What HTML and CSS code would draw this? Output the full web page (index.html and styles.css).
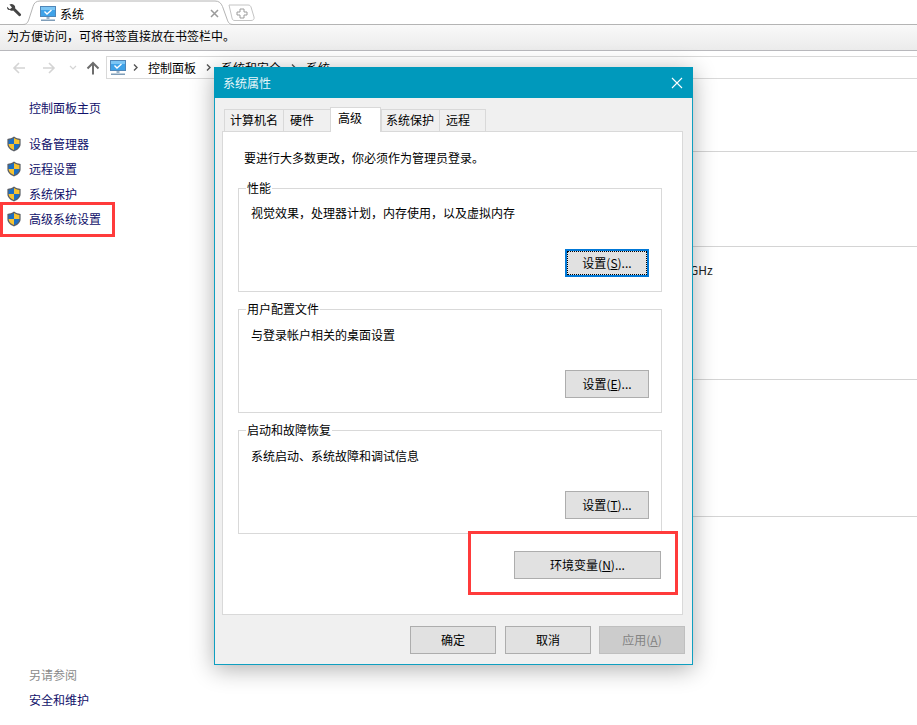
FILE: index.html
```html
<!DOCTYPE html>
<html lang="zh-CN">
<head>
<meta charset="utf-8">
<title>系统属性</title>
<link rel="stylesheet" href="styles.css">
</head>
<body>
<svg class="defs" width="0" height="0" aria-hidden="true">
  <defs>
    <symbol id="monitor" viewBox="0 0 16 16">
      <rect x="0.5" y="0.5" width="15" height="10" fill="#3fa2e8" stroke="#4f86b8"/>
      <rect x="1" y="1" width="14" height="3" fill="#7cc6f5"/>
      <path d="M4.500 5.500l2.500 2.500 4.500-4" fill="none" stroke="#fff" stroke-width="1.400"/>
      <rect x="6.500" y="11" width="3" height="2" fill="#9db4c8"/>
      <rect x="1" y="13.500" width="14" height="1.500" fill="#7f9db8"/>
    </symbol>
    <symbol id="shield" viewBox="0 0 16 16">
      <path d="M8 .6C6 2.200 3.800 2.800 1.400 2.900v5.300c0 3.200 2.900 5.800 6.600 7.200 3.700-1.400 6.600-4 6.600-7.200V2.900C12.200 2.800 10 2.200 8 .6z" fill="#5b5f66"/>
      <path d="M8 2v6H2.600V3.900C4.600 3.700 6.400 3.200 8 2z" fill="#1c6fc4"/>
      <path d="M8 2c1.600 1.200 3.400 1.700 5.400 1.900V8H8z" fill="#f7c331"/>
      <path d="M2.600 8H8v6.100C5 12.900 2.700 10.800 2.600 8z" fill="#f7c331"/>
      <path d="M8 8h5.400c-.1 2.800-2.400 4.900-5.400 6.100z" fill="#1c6fc4"/>
    </symbol>
  </defs>
</svg>

<header class="browser">
  <div class="tabstrip">
    <svg class="wrench" width="16" height="16" viewBox="0 0 16 16"><path d="M1 3.800 3.800 6.300 6 4.400 3.400 1.500C5.400.2 8.300 1 9 3.300c.2.700.2 1.400.1 2l5.800 5.600c.9.900-1 3-2 2.100L7.200 7.500C4.300 8.200.6 7 1 3.800z" fill="#444"/></svg>
    <div class="tab">
      <svg class="tab-shape" width="206" height="25" viewBox="0 0 206 25"><path d="M-27 24.500H-4C0 24.500 1 22 2 19L6 6.500C7 3 9 1 13 1H188C192 1 194 3 195.500 6.500L200 19C201 22 202 24.500 206 24.500" fill="#fff" stroke="#b4b4b4"/></svg>
      <svg class="tab-icon" width="16" height="16"><use href="#monitor"/></svg>
      <span class="tab-title">系统</span>
      <svg class="tab-close" width="9" height="9" viewBox="0 0 9 9"><path d="M1 1l7 7M8 1L1 8" stroke="#9a9a9a" stroke-width="1.500"/></svg>
    </div>
    <div class="newtab">
      <svg width="27" height="18" viewBox="0 0 27 18"><path d="M1 1H20C22 1 22.500 2 23 3L26 13C26.500 15 25.500 16.500 23 16.500H7C5 16.500 4.500 16 4 14z" fill="#fff" stroke="#c4c4c4"/><path d="M12 5h4v3h3v3h-3v3h-4v-3H9V8h3z" fill="#fff" stroke="#9c9c9c"/></svg>
    </div>
  </div>
  <div class="bookmarks">为方便访问，可将书签直接放在书签栏中。</div>
</header>

<nav class="navrow">
  <svg class="nav-btn" width="14" height="14" viewBox="0 0 14 14"><path d="M13 7H2M7 2L2 7l5 5" fill="none" stroke="#d4d4d4" stroke-width="1.600"/></svg>
  <svg class="nav-btn fwd" width="14" height="14" viewBox="0 0 14 14"><path d="M1 7h11M7 2l5 5-5 5" fill="none" stroke="#d4d4d4" stroke-width="1.600"/></svg>
  <svg class="nav-btn down" width="8" height="6" viewBox="0 0 8 6"><path d="M1 1l3 3 3-3" fill="none" stroke="#d4d4d4" stroke-width="1.200"/></svg>
  <svg class="nav-btn up" width="14" height="14" viewBox="0 0 14 14"><path d="M7 13.500V2M1.500 7.500 7 2l5.500 5.500" fill="none" stroke="#6d6d6d" stroke-width="2"/></svg>
  <div class="address">
    <svg class="addr-icon" width="16" height="16"><use href="#monitor"/></svg>
    <svg class="chev" width="5" height="7" viewBox="0 0 5 7"><path d="M1 .5l3 3-3 3" fill="none" stroke="#555" stroke-width="1.400"/></svg>
    <span>控制面板</span>
    <svg class="chev" width="5" height="7" viewBox="0 0 5 7"><path d="M1 .5l3 3-3 3" fill="none" stroke="#555" stroke-width="1.400"/></svg>
    <span>系统和安全</span>
    <svg class="chev" width="5" height="7" viewBox="0 0 5 7"><path d="M1 .5l3 3-3 3" fill="none" stroke="#555" stroke-width="1.400"/></svg>
    <span>系统</span>
  </div>
</nav>

<div class="main">
  <aside class="sidebar">
    <a class="home">控制面板主页</a>
    <ul class="links">
      <li><svg width="16" height="16"><use href="#shield"/></svg>设备管理器</li>
      <li><svg width="16" height="16"><use href="#shield"/></svg>远程设置</li>
      <li><svg width="16" height="16"><use href="#shield"/></svg>系统保护</li>
      <li class="marked"><svg width="16" height="16"><use href="#shield"/></svg>高级系统设置</li>
    </ul>
    <div class="seealso">
      <div class="seealso-title">另请参阅</div>
      <a class="seealso-link">安全和维护</a>
    </div>
  </aside>
  <section class="content">
    <div class="sec s1"></div>
    <div class="sec s2"></div>
    <div class="sec s3"><span class="ghz">GHz</span></div>
    <div class="sec s4"></div>
  </section>
</div>

<div class="dialog">
  <div class="titlebar">
    <span>系统属性</span>
    <svg width="12" height="12" viewBox="0 0 12 12"><path d="M1 1l10 10M11 1L1 11" stroke="#fff" stroke-width="1.100"/></svg>
  </div>
  <div class="dialog-body">
    <div class="tabs">
      <div class="dtab t1">计算机名</div>
      <div class="dtab t2">硬件</div>
      <div class="dtab t3 active">高级</div>
      <div class="dtab t4">系统保护</div>
      <div class="dtab t5">远程</div>
    </div>
    <div class="page">
      <p class="notice">要进行大多数更改，你必须作为管理员登录。</p>
      <fieldset class="group">
        <legend>性能</legend>
        <p>视觉效果，处理器计划，内存使用，以及虚拟内存</p>
        <div class="btnrow"><button class="btn focus"><span class="dots">设置(<u>S</u>)...</span></button></div>
      </fieldset>
      <fieldset class="group">
        <legend>用户配置文件</legend>
        <p>与登录帐户相关的桌面设置</p>
        <div class="btnrow"><button class="btn">设置(<u>E</u>)...</button></div>
      </fieldset>
      <fieldset class="group">
        <legend>启动和故障恢复</legend>
        <p>系统启动、系统故障和调试信息</p>
        <div class="btnrow"><button class="btn">设置(<u>T</u>)...</button></div>
      </fieldset>
      <div class="envrow"><button class="btn env">环境变量(<u>N</u>)...</button></div>
      <div class="redbox"></div>
    </div>
    <div class="footer">
      <button class="btn foot">确定</button>
      <button class="btn foot">取消</button>
      <button class="btn foot disabled">应用(<u>A</u>)</button>
    </div>
  </div>
</div>
</body>
</html>
```
FILE: styles.css
```css
*, *::after { box-sizing: border-box; }
html, body { margin: 0; padding: 0; }
body {
  width: 917px;
  height: 725px;
  overflow: hidden;
  position: relative;
  background: #fff;
  color: #000;
  font: 12px/16px "Noto Sans CJK SC", "Liberation Sans", sans-serif;
}
.defs { position: absolute; }

.browser { height: 51px; }
.tabstrip {
  height: 25px;
  display: flex;
  border-bottom: 1px solid #b4b4b4;
}
.wrench { margin: 3px 0 0 6px; flex: none; }
.tab {
  position: relative;
  margin-left: 5px;
  width: 206px;
  height: 25px;
  flex: none;
  display: flex;
  align-items: center;
  padding: 3px 0 0 13px;
}
.tab-shape { position: absolute; left: 0; top: 0; overflow: visible; }
.tab-icon, .tab-title, .tab-close { position: relative; flex: none; }
.tab-icon { margin-right: 4px; }
.tab-title { white-space: nowrap; }
.tab-close { margin: -2px 0 0 126px; }
.newtab { margin: 4px 0 0 -5px; height: 19px; }
.bookmarks {
  height: 26px;
  padding: 2px 0 0 7px;
  line-height: 18px;
  background: linear-gradient(#f9f9f9, #ebebeb);
  border-bottom: 1px solid #b8b8bc;
}

.navrow {
  height: 23px;
  margin-top: 5px;
  display: flex;
  align-items: center;
}
.nav-btn { flex: none; margin-left: 12px; }
.nav-btn.fwd { margin-left: 16px; }
.nav-btn.down { margin-left: 13px; }
.nav-btn.up { margin-left: 9px; }
.address {
  flex: 1;
  height: 23px;
  margin-left: 6px;
  display: flex;
  align-items: center;
  padding-left: 3px;
  border: 1px solid #d9d9d9;
  border-right: 0;
}
.addr-icon { margin-right: -3px; }
.chev { margin: 0 10px; }

.main { display: flex; height: 646px; }
.sidebar { width: 214px; flex: none; position: relative; }
.home { display: block; padding: 21px 0 0 29px; color: #10106a; height: 52px; }
.links { list-style: none; margin: 0; padding: 0 0 0 6px; }
.links li {
  height: 25px;
  display: flex;
  align-items: center;
  gap: 7px;
  color: #10106a;
}
.links li.marked::after {
  content: "";
  position: absolute;
  left: 0;
  top: 123px;
  width: 115px;
  height: 35px;
  border: 3px solid #ff3b3b;
}
.seealso { position: absolute; left: 29px; top: 588px; }
.seealso-title { color: #8a8a8a; height: 25px; }
.seealso-link { color: #10106a; }

.content { flex: 1; }
.sec { border-bottom: 1px solid #d4d4d4; }
.s1 { height: 73px; }
.s2 { height: 95px; }
.s3 { height: 133px; padding: 15px 0 0 476px; }
.ghz { color: #222; }
.s4 { height: 137px; }

.dialog {
  position: absolute;
  left: 214px;
  top: 67px;
  width: 479px;
  height: 598px;
  border: 1px solid #0f9fc0;
  border-top: 0;
  background: #f0f0f0;
  box-shadow: 0 4px 22px rgba(0, 0, 0, .32);
}
.titlebar {
  height: 31px;
  margin: 0 -1px;
  background: #0099bc;
  color: #e6f6fa;
  display: flex;
  align-items: center;
  justify-content: space-between;
  padding: 0 10px 0 9px;
}
.dialog-body { padding: 10px 9px 0 7px; }
.tabs { display: flex; height: 23px; margin-left: 2px; align-items: flex-end; }
.dtab {
  height: 22px;
  border: 1px solid #d9d9d9;
  border-bottom: 0;
  border-right: 0;
  line-height: 20px;
  background: #f0f0f0;
  white-space: nowrap;
}
.t1 { width: 59px; padding-left: 5px; }
.t2 { width: 47px; padding-left: 6px; }
.t3 { width: 51px; padding-left: 7px; }
.t4 { width: 58px; padding-left: 4px; }
.t5 { width: 47px; padding-left: 6px; border-right: 1px solid #d9d9d9; }
.dtab.active {
  height: 25px;
  background: #fff;
  border-right: 1px solid #d9d9d9;
  line-height: 19px;
  position: relative;
  top: 1px;
  z-index: 1;
}
.page {
  position: relative;
  height: 484px;
  background: #fff;
  border: 1px solid #d9d9d9;
  padding: 18px 20px 0 15px;
}
.notice { margin: 0 0 14px 6px; height: 16px; }
.group {
  margin: 0 0 9px;
  padding: 0 12px;
  height: 112px;
  width: 424px;
  min-width: 0;
  border: 1px solid #d9d9d9;
}
.group legend { padding: 0 1px; margin-left: -5px; line-height: 16px; }
.group p { margin: 9px 0 0; height: 16px; }
.btnrow { display: flex; justify-content: flex-end; margin-top: 28px; }
.group + .group p { margin-top: 10px; }
.group + .group .btnrow { margin-top: 27px; }
.btn {
  font: inherit;
  color: #000;
  width: 84px;
  height: 28px;
  padding: 0;
  background: #e1e1e1;
  border: 1px solid #adadad;
  display: flex;
  align-items: center;
  justify-content: center;
}
.btn.focus { border: 2px solid #0078d7; }
.dots { display: flex; align-items: center; justify-content: center; width: 78px; height: 22px; outline: 1px dotted #000; }
.envrow { display: flex; justify-content: flex-end; padding: 8px 1px 0 0; }
.btn.env { width: 147px; }
.redbox {
  position: absolute;
  left: 245px;
  top: 399px;
  width: 210px;
  height: 64px;
  border: 3px solid #ff3b3b;
}
.footer {
  display: flex;
  justify-content: flex-end;
  gap: 9px;
  margin: 11px -2px 0 0;
}
.btn.foot { width: 86px; }
.btn.disabled { background: #cccccc; border-color: #bfbfbf; color: #838383; margin-left: -1px; }
```
